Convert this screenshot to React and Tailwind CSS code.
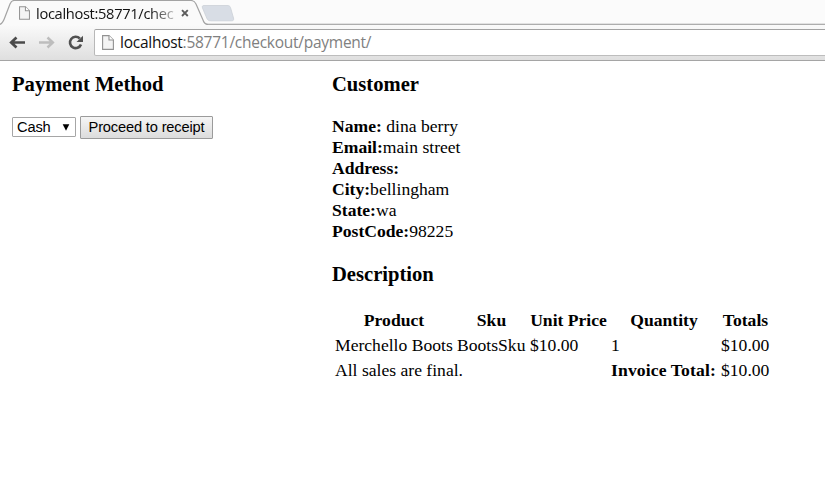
import React from "react";

const uiFont = "font-['Open_Sans','Noto_Sans',sans-serif]";

function PageIcon({ className }) {
  return (
    <svg className={className} viewBox="0 0 12 15" fill="none">
      <path d="M.6.6H7L11.4 5v9.4H.6z" fill="#f4f4f4" stroke="#929292" strokeWidth="1.1" />
      <path d="M7 .6V5h4.4" fill="#fff" stroke="#929292" strokeWidth="1.1" />
    </svg>
  );
}

function TabStrip() {
  return (
    <div className="relative h-[25px] bg-[#fbfbfb]">
      <svg className="absolute left-0 top-0" width="825" height="25" viewBox="0 0 825 25" fill="none">
        <path d="M0 24.5H825" stroke="#adadad" />
        <path d="M0 23.5H825" stroke="#e2e2e2" />
        <path d="M0 25V24C3 23 4 20 5 17L10 4C11 1.5 12 .5 14 .5H191C194 .5 195 2 196 4L203 20C204 23 205 24.5 208 24.5V25Z" fill="#fafafa" />
        <path d="M0 24.5C3 23 4 20 5 17L10 4C11 1.5 12 .5 14 .5H191C194 .5 195 2 196 4L203 20C204 23 205 24.5 208 24.5" stroke="#a3a3a3" strokeWidth="1.2" />
        <path d="M204 5.5H227C229 5.5 230 6 230.5 7.5L233.5 18C234 20 233.5 20.8 231.5 20.8H211C208.5 20.8 207.5 20 206.7 18L202.5 8C202 6.3 202.3 5.5 204 5.5Z" fill="#d8dde5" stroke="#cbd0d7" strokeWidth=".8" />
        <path d="M182 10.200L187.800 16M187.800 10.200L182 16" stroke="#5c5c5c" strokeWidth="1.900" />
      </svg>
      <div className="relative flex h-[25px] items-center pl-[19px]">
        <PageIcon className="h-[14px] w-[11px] shrink-0" />
        <span className={`${uiFont} ml-[6px] w-[138px] overflow-hidden whitespace-nowrap bg-[linear-gradient(90deg,#111_0,#111_114px,#11111144_138px)] bg-clip-text text-[14.67px] leading-[24px] tracking-[-0.32px] text-transparent`}>
          localhost:58771/chec
        </span>
      </div>
    </div>
  );
}

function Toolbar() {
  return (
    <div className="flex h-[36px] items-start border-b border-[#a5a5a5] bg-linear-to-b from-[#fafafa] to-[#dfdfdf] pl-[9px]">
      <svg className="mt-[10px] h-[16px] w-[85px] shrink-0" viewBox="0 0 85 16" fill="none">
        <path d="M7.5 2.5L2.2 7.5L7.5 12.5M2.5 7.5H16" stroke="#4b4b4b" strokeWidth="2.7" />
        <path d="M38.5 2.5L43.8 7.5L38.5 12.5M43.5 7.5H30" stroke="#bdbdbd" strokeWidth="2.5" />
        <path d="M70.8 3.5A5.7 5.7 0 1 0 72 9.5" stroke="#505050" strokeWidth="2.6" />
        <path d="M74 .7V7H67.5Z" fill="#505050" />
      </svg>
      <div className="mt-[4px] flex h-[27px] flex-1 items-center rounded-l-[2px] border border-r-0 border-b-[#bdbdbd] border-l-[#b8b8b8] border-t-[#a3a3a3] bg-white pl-[7px]">
        <PageIcon className="h-[15px] w-[12px] shrink-0" />
        <span className={`${uiFont} ml-[6px] whitespace-nowrap pb-px text-[15.5px] leading-[24px] tracking-[-0.26px] text-[#808080]`}>
          <span className="text-[#111]">localhost</span>:58771/checkout/payment/
        </span>
      </div>
    </div>
  );
}

const customer = [
  ["Name:", " dina berry"],
  ["Email:", "main street"],
  ["Address:", ""],
  ["City:", "bellingham"],
  ["State:", "wa"],
  ["PostCode:", "98225"],
];

export default function App() {
  return (
    <div className="h-[501px] w-[825px] overflow-hidden bg-white text-black">
      <TabStrip />
      <Toolbar />
      <main className="flex pl-[12px] pt-[11px] font-['Liberation_Serif','Times_New_Roman',serif] text-[17.6px] leading-[21px]">
        <section className="w-[320px]">
          <h3 className="h-[24px] text-[20.6px] font-bold leading-[24px]">Payment Method</h3>
          <div className="mt-[20px] flex items-start font-['Liberation_Sans',Arial,sans-serif] text-[14.67px] tracking-[-0.17px]">
            <div className="mt-px flex h-[20px] w-[64px] items-center justify-between rounded-[1px] border border-[#a6a6a6] bg-white pl-[4px] pr-[5px] leading-[18px]">
              <span className="pb-px">Cash</span>
              <svg width="8" height="7" viewBox="0 0 8 7"><path d="M.7.3h6.6L4 6.7z" fill="#000" /></svg>
            </div>
            <button className="ml-[4px] h-[23px] w-[133px] whitespace-nowrap rounded-[1px] border border-[#9b9b9b] bg-linear-to-b from-[#f5f5f5] to-[#dcdcdc] pb-px leading-[20px]">
              Proceed to receipt
            </button>
          </div>
        </section>
        <section>
          <h3 className="h-[24px] text-[20.6px] font-bold leading-[24px]">Customer</h3>
          <div className="mt-[20px]">
            {customer.map(([label, value]) => (
              <div key={label} className="h-[21px] whitespace-pre">
                <b>{label}</b>{value}
              </div>
            ))}
          </div>
          <h3 className="mt-[20px] h-[24px] text-[20.6px] font-bold leading-[24px]">Description</h3>
          <table className="mt-[21px] w-[441px] table-fixed border-separate border-spacing-[2px] whitespace-nowrap text-left">
            <colgroup>
              <col className="w-[120px]" />
              <col className="w-[71px]" />
              <col className="w-[79px]" />
              <col className="w-[108px]" />
              <col className="w-[51px]" />
            </colgroup>
            <thead>
              <tr className="text-center">
                <th className="p-px">Product</th>
                <th className="p-px">Sku</th>
                <th className="p-px">Unit Price</th>
                <th className="p-px">Quantity</th>
                <th className="p-px">Totals</th>
              </tr>
            </thead>
            <tbody>
              <tr>
                <td className="p-px">Merchello Boots</td>
                <td className="p-px">BootsSku</td>
                <td className="p-px">$10.00</td>
                <td className="p-px">1</td>
                <td className="p-px">$10.00</td>
              </tr>
              <tr>
                <td className="p-px" colSpan={3}>All sales are final.</td>
                <td className="p-px font-bold tracking-[0.13px]">Invoice Total:</td>
                <td className="p-px">$10.00</td>
              </tr>
            </tbody>
          </table>
        </section>
      </main>
    </div>
  );
}
